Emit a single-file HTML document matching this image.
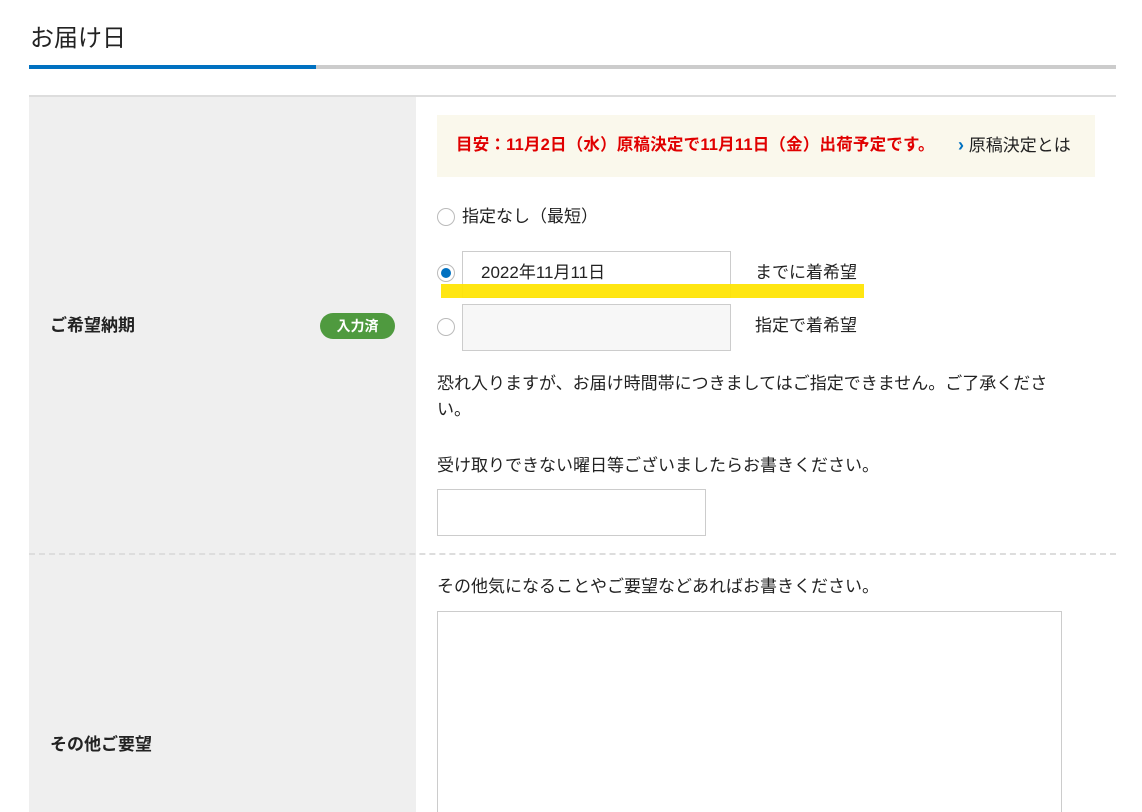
<!DOCTYPE html>
<html><head><meta charset="utf-8"><style>
*{margin:0;padding:0;box-sizing:border-box}
html,body{width:1142px;height:812px;overflow:hidden}
body{background:#fff;position:relative;font-family:"Liberation Sans","Noto Sans CJK JP",sans-serif;color:#222;font-size:16px}
.a{position:absolute;white-space:nowrap}
.radio{position:absolute;width:18px;height:18px;border:1px solid #bbb;border-radius:50%;background:#fff}
.inp{position:absolute;border:1px solid #ccc;background:#fff}
</style></head><body>
<div class="a" style="left:30px;top:23px;font-size:24px;line-height:32px">お届け日</div>
<div class="a" style="left:29px;top:65px;width:1087px;height:4px;background:#ccc"></div>
<div class="a" style="left:29px;top:65px;width:287px;height:4px;background:#0071c1"></div>
<div class="a" style="left:29px;top:95px;width:1087px;height:2px;background:#ddd"></div>
<div class="a" style="left:29px;top:97px;width:387px;height:715px;background:#efefef"></div>
<div class="a" style="left:29px;top:553px;width:1087px;height:0;border-top:2px dashed #ddd"></div>
<div class="a" style="left:50px;top:315px;font-size:17px;line-height:22px;font-weight:bold">ご希望納期</div>
<div class="a" style="left:320px;top:313px;width:75px;height:26px;border-radius:13px;background:#4f9a3f;color:#fff;font-size:14px;font-weight:bold;text-align:center;line-height:26px">入力済</div>
<div class="a" style="left:50px;top:734px;font-size:17px;line-height:22px;font-weight:bold">その他ご要望</div>
<div class="a" style="left:437px;top:115px;width:658px;height:62px;background:#faf8ec"></div>
<div class="a" style="left:456px;top:134px;font-size:16.5px;line-height:22px;color:#e00000;font-weight:bold;letter-spacing:0.2px">目安：11月2日（水）原稿決定で11月11日（金）出荷予定です。</div>
<div class="a" style="left:958px;top:134px;font-size:17px;line-height:22px"><span style="color:#0071c1;font-size:18px;font-weight:bold">›</span> 原稿決定とは</div>
<div class="radio" style="left:437px;top:208px"></div>
<div class="a" style="left:462px;top:206px;font-size:17px;line-height:22px">指定なし（最短）</div>
<div class="inp" style="left:462px;top:251px;width:269px;height:47px"></div>
<div class="radio" style="left:437px;top:264px"><div style="position:absolute;left:3px;top:3px;width:10px;height:10px;border-radius:50%;background:#0071c1"></div></div>
<div class="a" style="left:481px;top:262px;font-size:17px;line-height:22px">2022年11月11日</div>
<div class="a" style="left:755px;top:262px;font-size:17px;line-height:22px">までに着希望</div>
<div class="a" style="left:441px;top:284px;width:423px;height:14px;background:rgba(255,228,0,0.93)"></div>
<div class="inp" style="left:462px;top:304px;width:269px;height:47px;background:#f7f7f7"></div>
<div class="radio" style="left:437px;top:318px"></div>
<div class="a" style="left:755px;top:315px;font-size:17px;line-height:22px">指定で着希望</div>
<div class="a" style="left:437px;top:371px;font-size:17px;line-height:26px;white-space:normal;width:620px">恐れ入りますが、お届け時間帯につきましてはご指定できません。ご了承ください。</div>
<div class="a" style="left:437px;top:455px;font-size:17px;line-height:22px">受け取りできない曜日等ございましたらお書きください。</div>
<div class="inp" style="left:437px;top:489px;width:269px;height:47px"></div>
<div class="a" style="left:437px;top:576px;font-size:17px;line-height:22px">その他気になることやご要望などあればお書きください。</div>
<div class="inp" style="left:437px;top:611px;width:625px;height:210px"></div>
</body></html>
